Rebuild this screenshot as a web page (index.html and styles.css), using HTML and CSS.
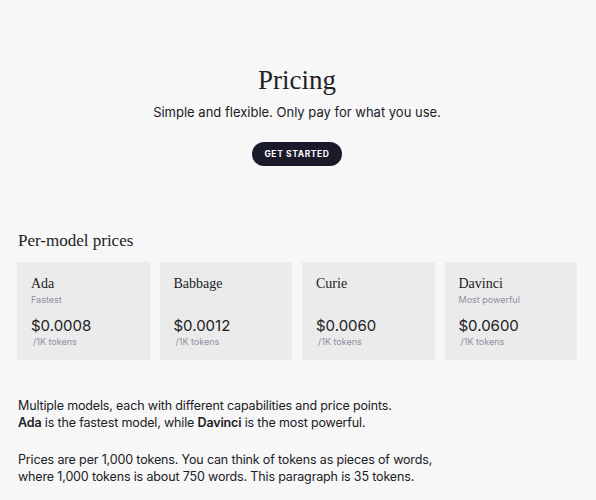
FILE: index.html
```html
<!DOCTYPE html>
<html lang="en">
<head>
<meta charset="utf-8">
<title>Pricing</title>
<link rel="stylesheet" href="styles.css">
</head>
<body>
<main class="page">
  <section class="hero">
    <h1 class="title">Pricing</h1>
    <p class="subtitle">Simple and flexible. Only pay for what you use.</p>
    <a class="cta" href="#">GET STARTED</a>
  </section>

  <section class="models">
    <h2 class="section-title">Per-model prices</h2>
    <div class="cards">
      <div class="card">
        <div class="card-name">Ada</div>
        <div class="card-tag">Fastest</div>
        <div class="card-price">$0.0008</div>
        <div class="card-unit">/1K tokens</div>
      </div>
      <div class="card">
        <div class="card-name">Babbage</div>
        <div class="card-tag">&nbsp;</div>
        <div class="card-price">$0.0012</div>
        <div class="card-unit">/1K tokens</div>
      </div>
      <div class="card">
        <div class="card-name">Curie</div>
        <div class="card-tag">&nbsp;</div>
        <div class="card-price">$0.0060</div>
        <div class="card-unit">/1K tokens</div>
      </div>
      <div class="card">
        <div class="card-name">Davinci</div>
        <div class="card-tag">Most powerful</div>
        <div class="card-price">$0.0600</div>
        <div class="card-unit">/1K tokens</div>
      </div>
    </div>
  </section>

  <section class="notes">
    <p>Multiple models, each with different capabilities and price points.<br><strong>Ada</strong> is the fastest model, while <strong>Davinci</strong> is the most powerful.</p>
    <p>Prices are per 1,000 tokens. You can think of tokens as pieces of words,<br>where 1,000 tokens is about 750 words. This paragraph is 35 tokens.</p>
  </section>
</main>
</body>
</html>
```

FILE: styles.css
```css
html, body {
  margin: 0;
  padding: 0;
  background: #f7f7f8;
  color: #202123;
  font-family: Inter, "Noto Sans", sans-serif;
}

.page {
  padding: 0 19px 0 17px;
}

.hero {
  display: flex;
  flex-direction: column;
  align-items: center;
  padding-top: 64px;
}

.title {
  margin: 0;
  font-family: "Liberation Serif", serif;
  font-weight: 400;
  font-size: 27px;
  line-height: 32px;
}

.subtitle {
  margin: 6px 0 0;
  font-size: 13px;
  line-height: 20px;
}

.cta {
  margin-top: 20px;
  display: inline-flex;
  align-items: center;
  justify-content: center;
  width: 90px;
  height: 24px;
  border-radius: 12px;
  background: #1b1a2b;
  color: #fff;
  text-decoration: none;
  font-size: 8.5px;
  font-weight: 700;
  letter-spacing: 0.6px;
}

.models {
  margin-top: 65px;
}

.section-title {
  margin: 0 0 11px 1px;
  font-family: "Liberation Serif", serif;
  font-weight: 400;
  font-size: 17px;
  line-height: 20px;
}

.cards {
  display: grid;
  grid-template-columns: repeat(4, 1fr);
  gap: 10px;
}

.card {
  background: #ebebeb;
  height: 98px;
  padding: 14px 14px 0;
  box-sizing: border-box;
}

.card-name {
  font-family: "Liberation Serif", serif;
  font-size: 14px;
  line-height: 16px;
}

.card-tag {
  margin-top: 2px;
  font-size: 9px;
  line-height: 12px;
  color: #8e8ea0;
}

.card-price {
  margin-top: 10px;
  font-size: 15px;
  line-height: 20px;
}

.card-unit {
  margin-top: 0;
  padding-left: 2px;
  font-size: 9px;
  line-height: 12px;
  color: #8e8ea0;
}

.notes {
  margin-top: 37px;
  padding-left: 1px;
}

.notes p {
  margin: 0 0 20px;
  font-size: 12.5px;
  line-height: 17px;
  letter-spacing: -0.15px;
}

.notes strong {
  font-weight: 600;
}
```
